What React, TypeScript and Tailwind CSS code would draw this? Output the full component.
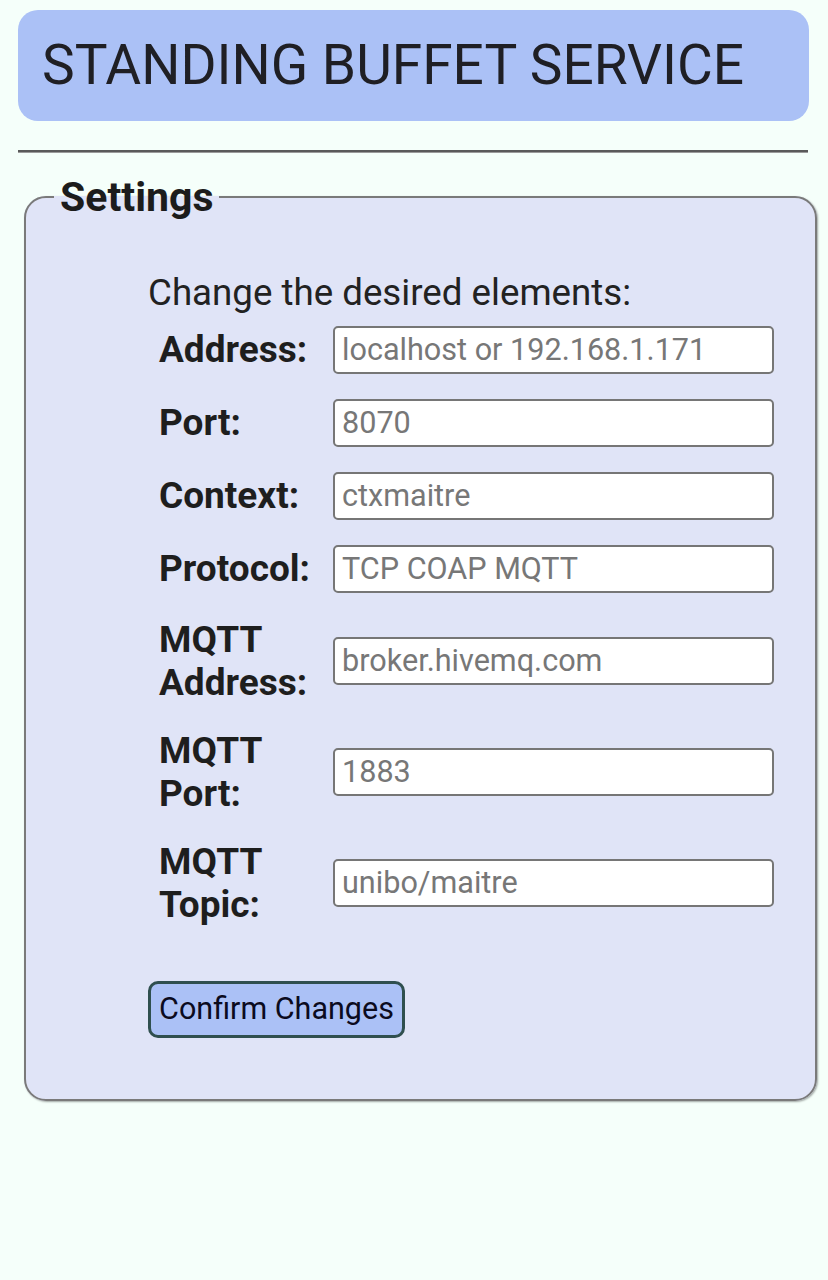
import React from "react";

const rows: { label: string[]; ph: string }[] = [
  { label: ["Address:"], ph: "localhost or 192.168.1.171" },
  { label: ["Port:"], ph: "8070" },
  { label: ["Context:"], ph: "ctxmaitre" },
  { label: ["Protocol:"], ph: "TCP COAP MQTT" },
  { label: ["MQTT", "Address:"], ph: "broker.hivemq.com" },
  { label: ["MQTT", "Port:"], ph: "1883" },
  { label: ["MQTT", "Topic:"], ph: "unibo/maitre" },
];

export default function App() {
  return (
    <div className="min-h-[1280px] w-[828px] bg-[#f5fffa] pt-[10px] font-['Roboto',sans-serif] text-[#222222]">
      <div className="ml-[18px] flex h-[111px] w-[791px] items-center rounded-[20px] bg-[#abc1f6] pl-[24px]">
        <h1 className="text-[55px] leading-none font-normal text-[#1f1f24]">STANDING BUFFET SERVICE</h1>
      </div>
      <div className="ml-[18px] mt-[29px] h-[3px] w-[790px] border-t-2 border-b border-t-[#5a5a5a] border-b-[#9a9a9a]" />
      <fieldset className="ml-[24px] mt-[20px] w-[793px] rounded-[22px] border-2 border-[#7a7a7a] bg-[#e0e4f7] pb-[61px] pl-[28px] shadow-[1px_1px_2px_rgba(0,0,0,0.35)]">
        <legend className="px-[6px] text-[41px] leading-[48px] font-bold text-[#1c1c1c]">Settings</legend>
        <div className="ml-[94px] mt-[51px]">
          <div className="text-[36.7px] leading-[42px] text-[#222222]">Change the desired elements:</div>
          <div className="-mt-[1px] flex flex-col">
            {rows.map((r) => (
              <div key={r.ph} className="flex items-center py-[12.5px]">
                <div className="w-[185px] pl-[11px] text-[37px] leading-[43px] font-bold text-[#1e1e1e]">
                  {r.label.map((l) => (
                    <div key={l}>{l}</div>
                  ))}
                </div>
                <input
                  className="h-[48px] w-[441px] rounded-[5px] border-2 border-[#767676] bg-white px-[7px] text-[30.6px] text-[#222] placeholder:text-[#777777] outline-none"
                  placeholder={r.ph}
                />
              </div>
            ))}
          </div>
          <button className="mt-[43px] flex h-[57px] w-[257px] items-center justify-center rounded-[10px] border-[3px] border-[#2f4f4f] bg-[#abc1f6] text-[30.5px] leading-none text-[#0b0b1e]">
            Confirm Changes
          </button>
        </div>
      </fieldset>
    </div>
  );
}
